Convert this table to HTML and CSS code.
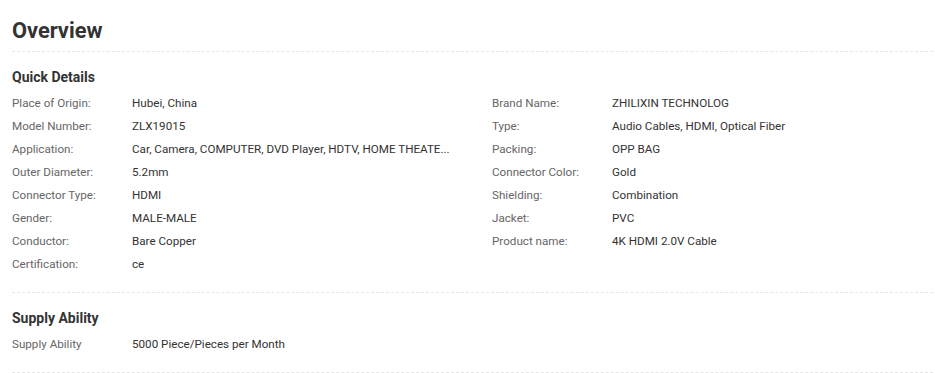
FILE: index.html
```html
<!DOCTYPE html>
<html lang="en">
<head>
<meta charset="utf-8">
<title>Overview</title>
<link rel="stylesheet" href="styles.css">
</head>
<body>
<div class="overview">
  <h2 class="title">Overview</h2>
  <section class="block">
    <h3 class="block-title">Quick Details</h3>
    <div class="details">
      <div class="col">
        <div class="row"><span class="label">Place of Origin:</span><span class="value">Hubei, China</span></div>
        <div class="row"><span class="label">Model Number:</span><span class="value">ZLX19015</span></div>
        <div class="row"><span class="label">Application:</span><span class="value">Car, Camera, COMPUTER, DVD Player, HDTV, HOME THEATE...</span></div>
        <div class="row"><span class="label">Outer Diameter:</span><span class="value">5.2mm</span></div>
        <div class="row"><span class="label">Connector Type:</span><span class="value">HDMI</span></div>
        <div class="row"><span class="label">Gender:</span><span class="value">MALE-MALE</span></div>
        <div class="row"><span class="label">Conductor:</span><span class="value">Bare Copper</span></div>
        <div class="row"><span class="label">Certification:</span><span class="value">ce</span></div>
      </div>
      <div class="col">
        <div class="row"><span class="label">Brand Name:</span><span class="value">ZHILIXIN TECHNOLOG</span></div>
        <div class="row"><span class="label">Type:</span><span class="value">Audio Cables, HDMI, Optical Fiber</span></div>
        <div class="row"><span class="label">Packing:</span><span class="value">OPP BAG</span></div>
        <div class="row"><span class="label">Connector Color:</span><span class="value">Gold</span></div>
        <div class="row"><span class="label">Shielding:</span><span class="value">Combination</span></div>
        <div class="row"><span class="label">Jacket:</span><span class="value">PVC</span></div>
        <div class="row"><span class="label">Product name:</span><span class="value">4K HDMI 2.0V Cable</span></div>
      </div>
    </div>
  </section>
  <section class="block">
    <h3 class="block-title">Supply Ability</h3>
    <div class="details">
      <div class="col">
        <div class="row"><span class="label">Supply Ability</span><span class="value">5000 Piece/Pieces per Month</span></div>
      </div>
    </div>
  </section>
</div>
</body>
</html>
```
FILE: styles.css
```css
html, body {
  margin: 0;
  padding: 0;
  background: #fff;
}
body {
  font-family: Roboto, "Liberation Sans", Arial, sans-serif;
  color: #333;
}
.overview {
  padding: 0 2px 0 12px;
}
.title {
  margin: 0;
  padding: 16px 0 5px;
  font-size: 21.8px;
  line-height: 30px;
  font-weight: 700;
  color: #333;
  border-bottom: 1px dashed #e6e6e6;
}
.block {
  padding: 15px 0 16px;
  border-bottom: 1px dashed #e6e6e6;
}
.block-title {
  margin: 0 0 5px;
  font-size: 14px;
  line-height: 20px;
  font-weight: 700;
  color: #333;
}
.details {
  display: grid;
  grid-template-columns: 480px 1fr;
}
.row {
  display: flex;
  font-size: 11.65px;
  line-height: 23px;
  white-space: nowrap;
}
.label {
  flex: 0 0 120px;
  color: #666;
}
.value {
  color: #333;
}
```
